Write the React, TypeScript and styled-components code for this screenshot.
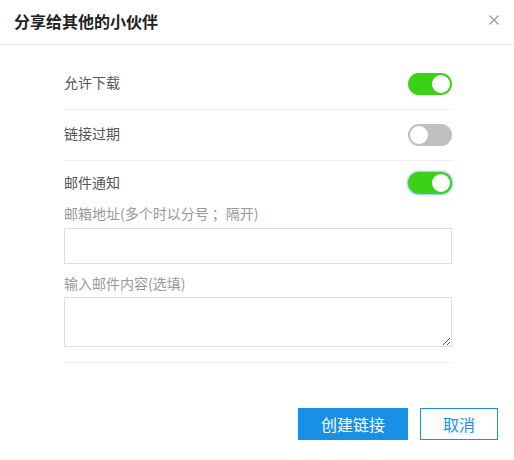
import React, { useState } from "react";
import styled, { createGlobalStyle, css } from "styled-components";

const Global = createGlobalStyle`
  html, body { margin: 0; padding: 0; background: #fff; }
  body { font-family: "Noto Sans CJK SC", "Noto Sans", sans-serif; }
  * { box-sizing: border-box; }
`;

const Dialog = styled.div`
  width: 514px;
  height: 460px;
  background: #fff;
  display: flex;
  flex-direction: column;
`;

const Header = styled.div`
  height: 45px;
  border-bottom: 1px solid #e8e8e8;
  display: flex;
  align-items: center;
  justify-content: space-between;
  padding: 0 14px 2px 14px;
`;

const Title = styled.h2`
  margin: 0;
  font-size: 16px;
  font-weight: bold;
  color: #222;
  line-height: 20px;
`;

const CloseBtn = styled.button`
  border: none;
  background: none;
  padding: 0;
  width: 12px;
  height: 12px;
  display: flex;
  cursor: pointer;
  margin-top: -3px;
`;

const Body = styled.div`
  padding: 14px 62px 0 64px;
  display: flex;
  flex-direction: column;
`;

const SwitchRow = styled.div<{ $last?: boolean }>`
  height: ${(p) => (p.$last ? "44px" : "51px")};
  display: flex;
  align-items: center;
  justify-content: space-between;
  border-bottom: ${(p) => (p.$last ? "none" : "1px solid #eeeeee")};
  padding-bottom: ${(p) => (p.$last ? "0" : "1px")};
`;

const RowLabel = styled.span`
  font-size: 14px;
  color: #555;
  line-height: 20px;
  margin-top: -3px;
`;

const Track = styled.button<{ $on: boolean; $focus?: boolean }>`
  width: 44px;
  height: 22px;
  border-radius: 11px;
  border: none;
  padding: 0;
  position: relative;
  cursor: pointer;
  background: ${(p) => (p.$on ? "#3bd116" : "#c0c0c0")};
  ${(p) =>
    p.$focus &&
    css`
      box-shadow: 0 0 0 1px rgba(150, 200, 255, 0.6), 0 0 3px 1px rgba(120, 180, 255, 0.6);
    `}
`;

const Knob = styled.span<{ $on: boolean }>`
  position: absolute;
  top: 2px;
  left: ${(p) => (p.$on ? "24px" : "2px")};
  width: 18px;
  height: 18px;
  border-radius: 50%;
  background: #fff;
`;

const FieldLabel = styled.label<{ $gap: number }>`
  display: block;
  margin-top: ${(p) => p.$gap}px;
  font-size: 14px;
  line-height: 20px;
  color: #999;
`;

const TextInput = styled.input`
  display: block;
  margin-top: 5px;
  width: 388px;
  height: 36px;
  border: 1px solid #dedede;
  outline: none;
  padding: 0 8px;
  font-size: 14px;
  font-family: inherit;
`;

const TextArea = styled.textarea`
  display: block;
  margin-top: 4px;
  width: 388px;
  height: 50px;
  border: 1px solid #dedede;
  outline: none;
  padding: 4px 8px;
  font-size: 14px;
  font-family: inherit;
`;

const Divider = styled.hr`
  margin: 15px 0 0;
  border: none;
  border-top: 1px solid #eeeeee;
  height: 0;
`;

const Footer = styled.div`
  display: flex;
  justify-content: flex-end;
  gap: 12px;
  padding: 45px 16px 0 0;
`;

const Btn = styled.button<{ $primary?: boolean; $w: number }>`
  width: ${(p) => p.$w}px;
  height: 32px;
  font-size: 16px;
  font-family: inherit;
  cursor: pointer;
  border: 1px solid #1890e6;
  background: ${(p) => (p.$primary ? "#1890e6" : "#fff")};
  color: ${(p) => (p.$primary ? "#fff" : "#1890e6")};
  padding: 0;
`;

const Switch = ({ on, focus, onClick }: { on: boolean; focus?: boolean; onClick: () => void }) => (
  <Track $on={on} $focus={focus} onClick={onClick}>
    <Knob $on={on} />
  </Track>
);

export default function App() {
  const [dl, setDl] = useState(true);
  const [exp, setExp] = useState(false);
  const [mail, setMail] = useState(true);
  return (
    <>
      <Global />
      <Dialog>
        <Header>
          <Title>分享给其他的小伙伴</Title>
          <CloseBtn aria-label="关闭">
            <svg width="12" height="12" viewBox="0 0 12 12">
              <path d="M1.5 1.5L10.5 10.5M10.5 1.5L1.5 10.5" stroke="#999" strokeWidth="1.4" />
            </svg>
          </CloseBtn>
        </Header>
        <Body>
          <SwitchRow>
            <RowLabel>允许下载</RowLabel>
            <Switch on={dl} onClick={() => setDl(!dl)} />
          </SwitchRow>
          <SwitchRow>
            <RowLabel>链接过期</RowLabel>
            <Switch on={exp} onClick={() => setExp(!exp)} />
          </SwitchRow>
          <SwitchRow $last>
            <RowLabel>邮件通知</RowLabel>
            <Switch on={mail} focus onClick={() => setMail(!mail)} />
          </SwitchRow>
          <FieldLabel $gap={-2}>邮箱地址(多个时以分号 ；隔开)</FieldLabel>
          <TextInput />
          <FieldLabel $gap={9}>输入邮件内容(选填)</FieldLabel>
          <TextArea />
          <Divider />
        </Body>
        <Footer>
          <Btn $primary $w={110}>创建链接</Btn>
          <Btn $w={78}>取消</Btn>
        </Footer>
      </Dialog>
    </>
  );
}
